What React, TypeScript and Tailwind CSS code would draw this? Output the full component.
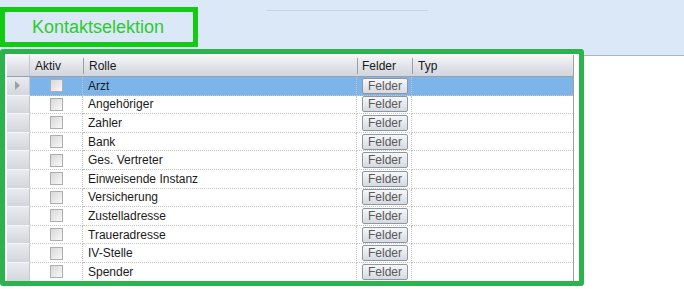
import React from 'react';

// Rollen in der Kontaktselektion
const ROLES = [
  'Arzt',
  'Angehöriger',
  'Zahler',
  'Bank',
  'Ges. Vertreter',
  'Einweisende Instanz',
  'Versicherung',
  'Zustelladresse',
  'Traueradresse',
  'IV-Stelle',
  'Spender',
];

const Checkbox: React.FC = () => (
  <div className="w-[13px] h-[13px] border border-[#aeaeae] bg-[linear-gradient(135deg,#d8d8d8,#f8f8f8)]" />
);

const FelderButton: React.FC = () => (
  <div className="w-[46px] h-[16px] border border-[#8d96a3] rounded-[2px] bg-[linear-gradient(to_bottom,#f6f7f9,#d6dae1)] text-[12px] leading-[14px] text-[#5a5a5a] text-center">
    Felder
  </div>
);

const App: React.FC = () => {
  return (
    <div
      className="w-[684px] h-[289px] overflow-hidden pt-[7px] bg-[linear-gradient(to_bottom,#dbe8f8_0px,#dbe8f8_55px,#aab4c0_55px,#aab4c0_56px,#ffffff_56px)]"
      style={{ fontFamily: '"Liberation Sans", Arial, sans-serif' }}
    >
      <div className="flex items-start">
        <div className="w-[198px] h-[40px] border-[5px] border-[#12cb12] flex items-center pl-[27px] text-[18px] text-[#2dcb2d]">
          Kontaktselektion
        </div>
        <div className="ml-[69px] mt-[3px] w-[161px] h-px bg-[#c9d4e0]" />
      </div>

      <div className="mt-[2px] w-[584px] h-[237px] border-[5px] border-[#2db34e] rounded-[3px] bg-white pl-[2px] pt-[1px] overflow-hidden">
        <div className="w-[567px] text-[12px] text-[#1a1a1a] border-r border-[#a0a0a0]">
          {/* Kopfzeile */}
          <div className="flex h-[22px] bg-[linear-gradient(to_bottom,#f6f6f8,#dfe1e7_60%,#d2d5dd)] border-b border-[#9aa0ab] items-center">
            <div className="w-[23px] h-full border-r border-[#c4c7ce]" />
            <div className="w-[53px] pl-[5px]">Aktiv</div>
            <div className="w-px h-[16px] bg-[#9a9ea6]" />
            <div className="w-[273px] pl-[5px]">Rolle</div>
            <div className="w-px h-[16px] bg-[#9a9ea6]" />
            <div className="w-[54px] pl-[4px]">Felder</div>
            <div className="w-px h-[16px] bg-[#9a9ea6]" />
            <div className="flex-1 pl-[5px]">Typ</div>
          </div>

          {ROLES.map((role, i) => (
            <div
              key={role}
              className={`flex h-[18.6px] items-center ${i === 0 ? 'bg-[#7db5eb]' : ''}`}
            >
              <div className="w-[23px] h-full bg-[linear-gradient(to_bottom,#eaebef,#d3d6dd)] border-b border-[#f4f5f7] border-r border-r-[#c4c7ce] flex items-center pl-[8px]">
                {i === 0 && (
                  <svg width="5" height="9" viewBox="0 0 5 9">
                    <path d="M0 0 L5 4.5 L0 9 Z" fill="#9aa1ab" />
                  </svg>
                )}
              </div>
              <div className="w-[53px] h-full flex items-center justify-center border-r border-dotted border-[#c6c6c6] border-b">
                <Checkbox />
              </div>
              <div className="w-[274px] h-full flex items-center pl-[5px] border-r border-dotted border-[#c6c6c6] border-b">
                {role}
              </div>
              <div className="w-[55px] h-full flex items-center pl-[5px] border-r border-dotted border-[#c6c6c6] border-b">
                <FelderButton />
              </div>
              <div className="flex-1 h-full border-b border-dotted border-[#c6c6c6]" />
            </div>
          ))}
        </div>
      </div>
    </div>
  );
};

export default App;
